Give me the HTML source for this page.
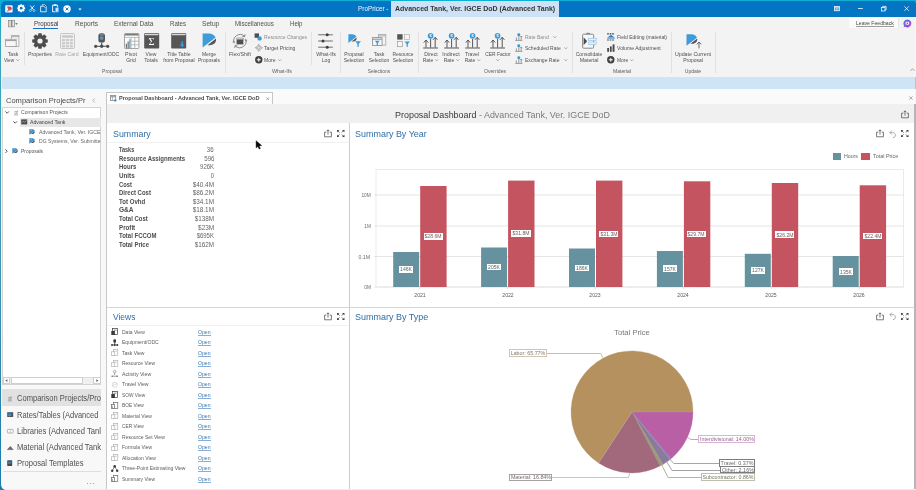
<!DOCTYPE html>
<html lang="en">
<head>
<meta charset="utf-8">
<title>ProPricer - Advanced Tank, Ver. IGCE DoD (Advanced Tank)</title>
<style>
html,body{margin:0;padding:0}
body{width:916px;height:490px;overflow:hidden;position:relative;background:#fff;font-family:"Liberation Sans",sans-serif;}
#app{position:absolute;left:0;top:0;width:916px;height:490px;overflow:hidden;background:#fff;will-change:transform}
#app div{position:absolute;box-sizing:border-box}
.t{white-space:nowrap}
.t span{position:static}
.i{position:absolute;overflow:visible}
section,header,nav,main{display:contents}
u{text-decoration:underline;text-decoration-thickness:0.5px;text-underline-offset:0.6px}
</style>
</head>
<body>
<div id="app">
<section id="window-frame">
<div style="left:0px;top:0px;width:916px;height:490px;background:#fff;"></div>
<div style="left:0px;top:0px;width:916px;height:18px;background:#0eafd4;"></div>
<div style="left:0px;top:16px;width:1px;height:474px;background:linear-gradient(to bottom,#0eafd4 0%,#36a4c0 4%,#3ba4bd 15%,#4a9ab5 38%,#2a86ad 80%,#1c7cae 100%);border-radius:0 0 0 4px;"></div>
<div style="left:1px;top:1px;width:915px;height:17px;background:#0375c3;border-radius:5px 3px 0 0;"></div>
<div style="left:1px;top:17px;width:914px;height:472px;background:#f7f7f7;"></div>
<div style="left:915px;top:17px;width:1px;height:60px;background:#f3f3f3;"></div>
<div style="left:915px;top:88px;width:1px;height:16px;background:#f4f4f4;"></div>
</section>
<header id="titlebar">
<svg class="i" style="left:5.2px;top:4.5px;" width="8" height="8" viewBox="0 0 8 8"><rect x="0.2" y="0.2" width="7.4" height="7.4" rx="0.8" fill="#f4f6fb"/><path d="M2 1.6h2.6c1.6 0 2.2 1 2.2 2 0 1.1-.8 1.9-2 1.9H3.6z" fill="#d9434f"/><path d="M1.6 6.6L4.4 3.2 5 4.6 3 6.6z" fill="#b5737f"/></svg>
<svg class="i" style="left:16.6px;top:4.2px;" width="8.4" height="8.4" viewBox="0 0 8.4 8.4"><rect x="3.24" y="0.20" width="1.92" height="8.00" rx="0.40" transform="rotate(0 4.2 4.2)" fill="#fff"/><rect x="3.24" y="0.20" width="1.92" height="8.00" rx="0.40" transform="rotate(45 4.2 4.2)" fill="#fff"/><rect x="3.24" y="0.20" width="1.92" height="8.00" rx="0.40" transform="rotate(90 4.2 4.2)" fill="#fff"/><rect x="3.24" y="0.20" width="1.92" height="8.00" rx="0.40" transform="rotate(135 4.2 4.2)" fill="#fff"/><circle cx="4.2" cy="4.2" r="3.12" fill="#fff"/><circle cx="4.2" cy="4.2" r="1.35" fill="#0375c3"/></svg>
<svg class="i" style="left:29px;top:5.2px;" width="6.4" height="7" viewBox="0 0 6.4 7"><path d="M1.2 0.5L4.6 4.8M5.2 0.5L1.8 4.8" stroke="#fff" stroke-width="0.9" fill="none"/><circle cx="1.4" cy="5.5" r="1" fill="none" stroke="#a8d4f6" stroke-width="0.8"/><circle cx="5" cy="5.5" r="1" fill="none" stroke="#a8d4f6" stroke-width="0.8"/></svg>
<svg class="i" style="left:40.2px;top:4.2px;" width="7" height="8.4" viewBox="0 0 7 8.4"><path d="M0.6 2.2h3.2l2.4 2.4v3.2h-5.6z" fill="none" stroke="#fff" stroke-width="0.8"/><path d="M2.2 2.2V0.6h2.4l1.8 1.8v2" fill="none" stroke="#cfe6fa" stroke-width="0.7"/></svg>
<svg class="i" style="left:51.8px;top:4.2px;" width="7.4" height="8.4" viewBox="0 0 7.4 8.4"><path d="M0.6 1.2h5v6.6h-5z" fill="none" stroke="#fff" stroke-width="0.9"/><rect x="1.8" y="0.3" width="2.6" height="1.6" fill="#fff"/><rect x="3.2" y="3.6" width="3.6" height="4.4" fill="#cfe6fa" stroke="#0673c4" stroke-width="0.4"/></svg>
<svg class="i" style="left:62.8px;top:4.5px;" width="8" height="8" viewBox="0 0 8 8"><circle cx="4" cy="4" r="3.7" fill="#fff"/><path d="M2.5 2.5l3 3M5.5 2.5l-3 3" stroke="#0673c4" stroke-width="0.9"/></svg>
<svg class="i" style="left:78px;top:8px;" width="4" height="3" viewBox="0 0 4 3"><path d="M0.4 0.6h3.2L2 2.4z" fill="#fff"/></svg>
<div class="t" style="top:4px;font-size:6.6px;line-height:9px;color:#eef6ff;transform:scaleX(0.968);transform-origin:left center;left:358.30px;">ProPricer - </div>
<div style="left:390.6px;top:1px;width:168.2px;height:15.6px;background:#cde2f6;"></div>
<div class="t" style="top:4px;font-size:6.8px;line-height:9px;color:#333;font-weight:bold;transform:scaleX(1.026);transform-origin:left center;left:394.80px;">Advanced Tank, Ver. IGCE DoD (Advanced Tank)</div>
<svg class="i" style="left:834.2px;top:6px;" width="6" height="5.4" viewBox="0 0 6 5.4"><rect x="0.4" y="0.4" width="5" height="4.4" fill="#5aa6de" stroke="#fff" stroke-width="0.7"/><path d="M0.4 1.7h5M2.9 1.7v3.1" stroke="#fff" stroke-width="0.5"/></svg>
<svg class="i" style="left:858.2px;top:8.2px;" width="5" height="1" viewBox="0 0 5 1"><rect x="0" y="0" width="4.7" height="0.8" fill="#fff"/></svg>
<svg class="i" style="left:881px;top:6px;" width="5.6" height="5.6" viewBox="0 0 5.6 5.6"><rect x="0.4" y="1.4" width="3.6" height="3.6" fill="none" stroke="#fff" stroke-width="0.75"/><path d="M1.6 1.4V0.4h3.5v3.5H4" fill="none" stroke="#fff" stroke-width="0.75"/></svg>
<svg class="i" style="left:903.8px;top:6.2px;" width="5.2" height="5.2" viewBox="0 0 5.2 5.2"><path d="M0.4 0.4l4.4 4.4M4.8 0.4L0.4 4.8" stroke="#fff" stroke-width="0.75"/></svg>
</header>
<section id="ribbon">
<div style="left:1px;top:17px;width:913.4px;height:60px;background:#f3f3f3;"></div>
<svg class="i" style="left:7.8px;top:19.8px;" width="10.4" height="7.4" viewBox="0 0 10.4 7.4"><rect x="0.5" y="0.5" width="5.9" height="6.3" fill="#ececec" stroke="#8a8a8a" stroke-width="0.8"/><rect x="0.9" y="0.9" width="1.8" height="5.5" fill="#d4d4d4"/><rect x="3.1" y="0.6" width="1.3" height="6.1" fill="#7c7c7c"/><path d="M7.2 3.1h2.6L8.5 4.9z" fill="#7a7a7a"/></svg>
<div class="t" style="top:19px;font-size:6.8px;line-height:9px;color:#3a3a3a;transform:scaleX(0.913);transform-origin:left center;left:33.80px;">Proposal</div>
<div class="t" style="top:19px;font-size:6.8px;line-height:9px;color:#505050;transform:scaleX(0.966);transform-origin:left center;left:74.50px;">Reports</div>
<div class="t" style="top:19px;font-size:6.8px;line-height:9px;color:#505050;transform:scaleX(0.954);transform-origin:left center;left:113.80px;">External Data</div>
<div class="t" style="top:19px;font-size:6.8px;line-height:9px;color:#505050;transform:scaleX(0.901);transform-origin:left center;left:169.80px;">Rates</div>
<div class="t" style="top:19px;font-size:6.8px;line-height:9px;color:#505050;transform:scaleX(0.974);transform-origin:left center;left:202.00px;">Setup</div>
<div class="t" style="top:19px;font-size:6.8px;line-height:9px;color:#505050;transform:scaleX(0.901);transform-origin:left center;left:235.30px;">Miscellaneous</div>
<div class="t" style="top:19px;font-size:6.8px;line-height:9px;color:#505050;transform:scaleX(0.894);transform-origin:left center;left:289.80px;">Help</div>
<div style="left:33.3px;top:28px;width:25px;height:1.2px;background:#1a72bd;"></div>
<div style="left:849px;top:17.6px;width:49.5px;height:10.6px;background:#fbfbfb;"></div>
<div class="t" style="top:19px;font-size:5.5px;line-height:8px;color:#444;transform:scaleX(0.929);transform-origin:left center;left:855.80px;">Leave Feedback</div>
<div style="left:855.8px;top:25.5px;width:37.8px;height:0.6px;background:#9c9c9c;"></div>
<div style="left:898.2px;top:18px;width:0.8px;height:10px;background:#e4e4e4;"></div>
<svg class="i" style="left:903.2px;top:19px;" width="9" height="9" viewBox="0 0 9 9"><defs><linearGradient id="fg" x1="0" y1="0" x2="1" y2="1"><stop offset="0" stop-color="#3f7fe8"/><stop offset="1" stop-color="#c23bd8"/></linearGradient></defs><path d="M4.4 0.4a4 4 0 1 1-2.3 7.3L0.6 8.3l.5-1.7A4 4 0 0 1 4.4.4z" fill="url(#fg)"/><rect x="2.6" y="2.8" width="3.6" height="3" rx="0.7" fill="#f3ecfb"/><circle cx="4.4" cy="4.3" r="0.8" fill="#8d55dd"/></svg>
<svg class="i" style="left:5px;top:35px;" width="14.5" height="12" viewBox="0 0 14.5 12"><rect x="6.5" y="0.5" width="7.4" height="11" fill="#f7f7f7" stroke="#a6a6a6" stroke-width="0.8"/><path d="M6.5 1.7h7.4" stroke="#a6a6a6" stroke-width="1"/><rect x="0.6" y="4.3" width="10.6" height="7.2" fill="#f7f7f7" stroke="#9a9a9a" stroke-width="0.8"/><path d="M0.6 5.6h10.6" stroke="#9a9a9a" stroke-width="1"/></svg>
<div class="t" style="top:50px;font-size:5.5px;line-height:8px;color:#505050;transform:scaleX(0.910);transform-origin:center center;left:-87.50px;width:200px;text-align:center;"><span>Task</span></div>
<div class="t" style="top:56px;font-size:5.5px;line-height:8px;color:#505050;transform:scaleX(0.862);transform-origin:center center;left:-90.60px;width:200px;text-align:center;"><span>View</span></div>
<svg class="i" style="left:16.4px;top:59.2px;" width="3.6" height="2.4" viewBox="0 0 3.6 2.4"><path d="M0.4 0.4L1.8 1.9 3.2 0.4" fill="none" stroke="#7a7a7a" stroke-width="0.6"/></svg>
<div style="left:23.8px;top:31.5px;width:0.8px;height:33px;background:#e2e2e2;"></div>
<svg class="i" style="left:32.2px;top:33px;" width="16" height="16" viewBox="0 0 16 16"><rect x="6.13" y="0.20" width="3.74" height="15.60" rx="0.78" transform="rotate(0 8 8)" fill="#4d4d4d"/><rect x="6.13" y="0.20" width="3.74" height="15.60" rx="0.78" transform="rotate(45 8 8)" fill="#4d4d4d"/><rect x="6.13" y="0.20" width="3.74" height="15.60" rx="0.78" transform="rotate(90 8 8)" fill="#4d4d4d"/><rect x="6.13" y="0.20" width="3.74" height="15.60" rx="0.78" transform="rotate(135 8 8)" fill="#4d4d4d"/><circle cx="8" cy="8" r="6.08" fill="#4d4d4d"/><circle cx="8" cy="8" r="2.60" fill="#f3f3f3"/></svg>
<div class="t" style="top:50px;font-size:5.5px;line-height:8px;color:#505050;transform:scaleX(0.949);transform-origin:center center;left:-60.00px;width:200px;text-align:center;"><span>Properties</span></div>
<svg class="i" style="left:60px;top:33px;" width="15" height="16" viewBox="0 0 15 16"><rect x="0.5" y="0.5" width="14" height="15" rx="1" fill="#f0f0f0" stroke="#bdbdbd" stroke-width="0.8"/><rect x="2" y="2.4" width="11" height="2.2" fill="#c6c6c6"/><rect x="2.0" y="6.0" width="3" height="2.2" fill="#cacaca"/><rect x="2.0" y="9.1" width="3" height="2.2" fill="#cacaca"/><rect x="2.0" y="12.2" width="3" height="2.2" fill="#cacaca"/><rect x="5.9" y="6.0" width="3" height="2.2" fill="#cacaca"/><rect x="5.9" y="9.1" width="3" height="2.2" fill="#cacaca"/><rect x="5.9" y="12.2" width="3" height="2.2" fill="#cacaca"/><rect x="9.8" y="6.0" width="3" height="2.2" fill="#cacaca"/><rect x="9.8" y="9.1" width="3" height="2.2" fill="#cacaca"/><rect x="9.8" y="12.2" width="3" height="2.2" fill="#cacaca"/></svg>
<div class="t" style="top:50px;font-size:5.5px;line-height:8px;color:#a6a6a6;transform:scaleX(0.929);transform-origin:center center;left:-32.80px;width:200px;text-align:center;"><span>Rate Card</span></div>
<svg class="i" style="left:93.6px;top:33px;" width="15.4" height="16" viewBox="0 0 15.4 16"><rect x="4.4" y="0.3" width="6.6" height="9.2" rx="2.6" fill="#555"/><rect x="6" y="3.4" width="3.4" height="3.4" rx="0.8" fill="#5d93c0"/><ellipse cx="7.7" cy="1.9" rx="2.2" ry="0.8" fill="#888"/><path d="M7.7 9.4v4M1.4 13.3h12.6" stroke="#4d4d4d" stroke-width="1.1"/><circle cx="1.7" cy="13.3" r="1.6" fill="#4d4d4d"/><circle cx="7.7" cy="13.3" r="1.7" fill="#4d4d4d"/><circle cx="13.7" cy="13.3" r="1.6" fill="#4d4d4d"/></svg>
<div class="t" style="top:50px;font-size:5.5px;line-height:8px;color:#505050;transform:scaleX(0.906);transform-origin:center center;left:1.00px;width:200px;text-align:center;"><span>Equipment/ODC</span></div>
<svg class="i" style="left:123.6px;top:33px;" width="15.4" height="16" viewBox="0 0 15.4 16"><rect x="0.5" y="0.5" width="14.4" height="15" rx="0.8" fill="#fbfbfb" stroke="#9a9a9a" stroke-width="0.9"/><rect x="0.9" y="0.9" width="13.6" height="1.6" fill="#7a7a7a"/><path d="M0.6 4.4h14.2M7 4.4v11M10.8 4.4v11M7 8.2h7.8M7 11.8h7.8" stroke="#a4a4a4" stroke-width="0.7" fill="none"/><rect x="1.8" y="10.6" width="1.1" height="4.6" fill="#666"/><rect x="3.6" y="8.4" width="1.1" height="6.8" fill="#666"/><rect x="5.3" y="6.2" width="1.1" height="9" fill="#3a9ad9"/></svg>
<div class="t" style="top:50px;font-size:5.5px;line-height:8px;color:#505050;transform:scaleX(0.964);transform-origin:center center;left:31.00px;width:200px;text-align:center;"><span>Pivot</span></div>
<div class="t" style="top:56px;font-size:5.5px;line-height:8px;color:#505050;transform:scaleX(0.914);transform-origin:center center;left:31.00px;width:200px;text-align:center;"><span>Grid</span></div>
<svg class="i" style="left:143.8px;top:33px;" width="15.4" height="16" viewBox="0 0 15.4 16"><rect x="0.2" y="0.2" width="15" height="15.4" rx="0.8" fill="#565656"/><rect x="0.9" y="1.1" width="13.6" height="1.1" fill="#e8e8e8"/></svg>
<div class="t" style="top:35px;font-size:10.5px;line-height:14px;color:#fff;left:51.50px;width:200px;text-align:center;font-family:'Liberation Serif',serif;"><span>Σ</span></div>
<div class="t" style="top:50px;font-size:5.5px;line-height:8px;color:#505050;transform:scaleX(0.913);transform-origin:center center;left:51.00px;width:200px;text-align:center;"><span>View</span></div>
<div class="t" style="top:56px;font-size:5.5px;line-height:8px;color:#505050;transform:scaleX(0.946);transform-origin:center center;left:51.00px;width:200px;text-align:center;"><span>Totals</span></div>
<svg class="i" style="left:171.4px;top:33px;" width="15.4" height="16" viewBox="0 0 15.4 16"><rect x="0.2" y="0.2" width="15" height="15.4" rx="0.8" fill="#565656"/><rect x="0.9" y="1.1" width="13.6" height="1.1" fill="#e8e8e8"/><path d="M11.2 8.6v3.6" stroke="#3a9ad9" stroke-width="1.6"/><path d="M8.8 11.4h4.8l-2.4 3z" fill="#3a9ad9"/></svg>
<div class="t" style="top:50px;font-size:5.5px;line-height:8px;color:#505050;transform:scaleX(0.941);transform-origin:center center;left:78.80px;width:200px;text-align:center;"><span>Title Table</span></div>
<div class="t" style="top:56px;font-size:5.5px;line-height:8px;color:#505050;transform:scaleX(0.920);transform-origin:center center;left:78.80px;width:200px;text-align:center;"><span>from Proposal</span></div>
<svg class="i" style="left:202px;top:33.4px;" width="15" height="15" viewBox="0 0 15 15"><path d="M0.6 0.4h6.6c3 0 5.4 1.6 6.4 4.2L0.6 14.6z" fill="#3f9cda"/><path d="M14 5.6c.6 3.6-2 6.6-6.4 6.6H5.6z" fill="#555"/></svg>
<div class="t" style="top:50px;font-size:5.5px;line-height:8px;color:#505050;transform:scaleX(0.911);transform-origin:center center;left:109.20px;width:200px;text-align:center;"><span>Merge</span></div>
<div class="t" style="top:56px;font-size:5.5px;line-height:8px;color:#505050;transform:scaleX(0.891);transform-origin:center center;left:109.20px;width:200px;text-align:center;"><span>Proposals</span></div>
<div class="t" style="top:67px;font-size:5.4px;line-height:8px;color:#5e5e5e;transform:scaleX(0.930);transform-origin:center center;left:12.00px;width:200px;text-align:center;"><span>Proposal</span></div>
<div style="left:224.6px;top:31.5px;width:0.8px;height:41px;background:#e2e2e2;"></div>
<svg class="i" style="left:231.8px;top:33px;" width="15.6" height="16" viewBox="0 0 15.6 16"><path d="M2.2 10.4A6.4 6.4 0 0 1 12.4 3.2" fill="none" stroke="#707070" stroke-width="0.8"/><path d="M13.6 5.8A6.4 6.4 0 0 1 3.4 13" fill="none" stroke="#707070" stroke-width="0.8"/><path d="M10.4 3.4l2.4.2.2-2.4" fill="none" stroke="#707070" stroke-width="0.8"/><path d="M5.4 12.8L3 12.6l-.2 2.4" fill="none" stroke="#707070" stroke-width="0.8"/><path d="M13 6.6l.8 1.6 1.4-1.2M2.8 9.6L2 8 0.6 9.2" fill="none" stroke="#707070" stroke-width="0.7"/><rect x="4.6" y="4.8" width="6.8" height="6.6" fill="#505050"/><rect x="5" y="5.2" width="6" height="1.2" fill="#e4e4e4"/></svg>
<div class="t" style="top:50px;font-size:5.5px;line-height:8px;color:#505050;transform:scaleX(0.950);transform-origin:center center;left:140.00px;width:200px;text-align:center;"><span>Flex/Shift</span></div>
<svg class="i" style="left:254.4px;top:33px;" width="8" height="8" viewBox="0 0 8 8"><rect x="0.6" y="0.4" width="4.4" height="4.4" fill="#4f4f4f"/><circle cx="5.6" cy="5.4" r="2.2" fill="#3a9ad9"/></svg>
<div class="t" style="top:33px;font-size:5.5px;line-height:8px;color:#8c8c8c;transform:scaleX(0.913);transform-origin:left center;left:264.20px;">Resource Changes</div>
<svg class="i" style="left:254.6px;top:44.2px;" width="7.6" height="7.6" viewBox="0 0 7.6 7.6"><path d="M3.8 0.5L7.1 3.8 3.8 7.1 0.5 3.8z" fill="none" stroke="#8a8a8a" stroke-width="0.6"/><circle cx="3.8" cy="3.8" r="1.3" fill="none" stroke="#7a7a7a" stroke-width="0.6"/><path d="M3.8 0v2M3.8 5.6v2M0 3.8h2M5.6 3.8h2" stroke="#8a8a8a" stroke-width="0.5"/></svg>
<div class="t" style="top:44px;font-size:5.5px;line-height:8px;color:#505050;transform:scaleX(0.933);transform-origin:left center;left:264.40px;">Target Pricing</div>
<svg class="i" style="left:254.6px;top:55.7px;" width="7.6" height="7.6" viewBox="0 0 7.6 7.6"><circle cx="3.8" cy="3.8" r="3.7" fill="#3d3d3d"/><path d="M3.8 1.8v4M1.8 3.8h4" stroke="#fff" stroke-width="1"/></svg>
<div class="t" style="top:56px;font-size:5.5px;line-height:8px;color:#505050;transform:scaleX(0.926);transform-origin:left center;left:264.20px;">More</div>
<svg class="i" style="left:277.7px;top:58.7px;" width="3.6" height="2.4" viewBox="0 0 3.6 2.4"><path d="M0.4 0.4L1.8 1.9 3.2 0.4" fill="none" stroke="#7a7a7a" stroke-width="0.6"/></svg>
<div style="left:311.1px;top:31.5px;width:0.8px;height:33px;background:#e2e2e2;"></div>
<svg class="i" style="left:318px;top:33px;" width="15" height="16" viewBox="0 0 15 16"><path d="M0.2 1.8h14.6M0.2 8h14.6M0.2 14.2h14.6" stroke="#4d4d4d" stroke-width="0.8"/><circle cx="9.2" cy="1.8" r="1.5" fill="#3d3d3d"/><circle cx="5" cy="8" r="1.5" fill="#3d3d3d"/><circle cx="9.2" cy="14.2" r="1.5" fill="#3d3d3d"/></svg>
<div class="t" style="top:50px;font-size:5.5px;line-height:8px;color:#505050;transform:scaleX(0.957);transform-origin:center center;left:225.60px;width:200px;text-align:center;"><span>What-Ifs</span></div>
<div class="t" style="top:56px;font-size:5.5px;line-height:8px;color:#505050;transform:scaleX(0.914);transform-origin:center center;left:225.60px;width:200px;text-align:center;"><span>Log</span></div>
<div class="t" style="top:67px;font-size:5.4px;line-height:8px;color:#5e5e5e;transform:scaleX(1.006);transform-origin:center center;left:182.20px;width:200px;text-align:center;"><span>What-Ifs</span></div>
<div style="left:340px;top:31.5px;width:0.8px;height:41px;background:#e2e2e2;"></div>
<svg class="i" style="left:347.6px;top:34px;" width="9.3" height="9.3" viewBox="0 0 15 15"><path d="M0.6 0.4h6.6c3 0 5.4 1.6 6.4 4.2L0.6 14.6z" fill="#3f9cda"/><path d="M14 5.6c.6 3.6-2 6.6-6.4 6.6H5.6z" fill="#555"/></svg>
<svg class="i" style="left:355px;top:41.4px;" width="6.2" height="6.2" viewBox="0 0 6.2 6.2"><path d="M0.2 0.2h5.75l-2.1849999999999996 2.53v2.9899999999999998h-1.38v-2.9899999999999998z" fill="#3a9ad9"/></svg>
<div class="t" style="top:50px;font-size:5.5px;line-height:8px;color:#505050;transform:scaleX(0.893);transform-origin:center center;left:254.00px;width:200px;text-align:center;"><span>Proposal</span></div>
<div class="t" style="top:56px;font-size:5.5px;line-height:8px;color:#505050;transform:scaleX(0.910);transform-origin:center center;left:254.00px;width:200px;text-align:center;"><span>Selection</span></div>
<svg class="i" style="left:371.8px;top:34.4px;" width="14.4" height="13" viewBox="0 0 14.4 13"><rect x="6.6" y="0.5" width="7.2" height="10.6" fill="#f4f4f4" stroke="#a4a4a4" stroke-width="0.8"/><path d="M6.6 1.9h7.2" stroke="#a4a4a4" stroke-width="0.9"/><rect x="0.5" y="3.6" width="9.6" height="7.8" fill="#f4f4f4" stroke="#8c8c8c" stroke-width="0.8"/><path d="M0.5 5.2h9.6" stroke="#8c8c8c" stroke-width="1"/><path d="M2.8 6.8h5.0l-1.9 2.2v2.6h-1.2v-2.6z" fill="#3a9ad9"/></svg>
<div class="t" style="top:50px;font-size:5.5px;line-height:8px;color:#505050;transform:scaleX(0.928);transform-origin:center center;left:278.50px;width:200px;text-align:center;"><span>Task</span></div>
<div class="t" style="top:56px;font-size:5.5px;line-height:8px;color:#505050;transform:scaleX(0.910);transform-origin:center center;left:278.50px;width:200px;text-align:center;"><span>Selection</span></div>
<svg class="i" style="left:397px;top:34px;" width="14" height="14" viewBox="0 0 14 14"><rect x="0.2" y="0.2" width="5.4" height="5.4" fill="#555"/><rect x="7.6" y="0.5" width="4.8" height="4.8" fill="#f6f6f6" stroke="#b0b0b0" stroke-width="0.7"/><rect x="0.5" y="7.5" width="4.8" height="5.2" fill="#f6f6f6" stroke="#9c9c9c" stroke-width="0.7"/><path d="M7.6 7.6h5.25l-1.9949999999999999 2.3100000000000005v2.7300000000000004h-1.26v-2.7300000000000004z" fill="#3a9ad9"/></svg>
<div class="t" style="top:50px;font-size:5.5px;line-height:8px;color:#505050;transform:scaleX(0.892);transform-origin:center center;left:303.20px;width:200px;text-align:center;"><span>Resource</span></div>
<div class="t" style="top:56px;font-size:5.5px;line-height:8px;color:#505050;transform:scaleX(0.910);transform-origin:center center;left:303.20px;width:200px;text-align:center;"><span>Selection</span></div>
<div class="t" style="top:67px;font-size:5.4px;line-height:8px;color:#5e5e5e;transform:scaleX(0.901);transform-origin:center center;left:279.00px;width:200px;text-align:center;"><span>Selections</span></div>
<div style="left:418.2px;top:31.5px;width:0.8px;height:41px;background:#e2e2e2;"></div>
<svg class="i" style="left:422.8px;top:33px;" width="15.2" height="15.6" viewBox="0 0 15.2 15.6"><path d="M0.2 15h14.8" stroke="#555" stroke-width="1"/><path d="M3 14.6V7.6M0.8 9.6L3 7l2.2 2.6" fill="none" stroke="#555" stroke-width="1"/><path d="M7.6 14.6V6" fill="none" stroke="#555" stroke-width="1"/><path d="M12.2 14.6V4.8M10 6.8l2.2-2.6 2.2 2.6" fill="none" stroke="#555" stroke-width="1"/><circle cx="7.6" cy="2.9" r="2.8" fill="#3a9ad9"/><text x="7.6" y="4.4" font-size="4.4" font-weight="bold" text-anchor="middle" fill="#eef7fe" font-family="Liberation Sans, sans-serif">$</text></svg>
<div class="t" style="top:50px;font-size:5.5px;line-height:8px;color:#505050;transform:scaleX(0.932);transform-origin:center center;left:330.50px;width:200px;text-align:center;"><span>Direct</span></div>
<div class="t" style="top:56px;font-size:5.5px;line-height:8px;color:#505050;transform:scaleX(0.912);transform-origin:center center;left:327.60px;width:200px;text-align:center;"><span>Rate</span></div>
<svg class="i" style="left:435.2px;top:59.2px;" width="3.6" height="2.4" viewBox="0 0 3.6 2.4"><path d="M0.4 0.4L1.8 1.9 3.2 0.4" fill="none" stroke="#7a7a7a" stroke-width="0.6"/></svg>
<svg class="i" style="left:443.6px;top:33px;" width="15.2" height="15.6" viewBox="0 0 15.2 15.6"><path d="M0.2 15h14.8" stroke="#555" stroke-width="1"/><path d="M3 14.6V7.6M0.8 9.6L3 7l2.2 2.6" fill="none" stroke="#555" stroke-width="1"/><path d="M7.6 14.6V6" fill="none" stroke="#555" stroke-width="1"/><path d="M12.2 14.6V4.8M10 6.8l2.2-2.6 2.2 2.6" fill="none" stroke="#555" stroke-width="1"/><circle cx="7.6" cy="2.9" r="2.8" fill="#3a9ad9"/><text x="7.6" y="4.4" font-size="4.4" font-weight="bold" text-anchor="middle" fill="#eef7fe" font-family="Liberation Sans, sans-serif">$</text></svg>
<div class="t" style="top:50px;font-size:5.5px;line-height:8px;color:#505050;transform:scaleX(0.975);transform-origin:center center;left:351.40px;width:200px;text-align:center;"><span>Indirect</span></div>
<div class="t" style="top:56px;font-size:5.5px;line-height:8px;color:#505050;transform:scaleX(0.912);transform-origin:center center;left:348.50px;width:200px;text-align:center;"><span>Rate</span></div>
<svg class="i" style="left:456.1px;top:59.2px;" width="3.6" height="2.4" viewBox="0 0 3.6 2.4"><path d="M0.4 0.4L1.8 1.9 3.2 0.4" fill="none" stroke="#7a7a7a" stroke-width="0.6"/></svg>
<svg class="i" style="left:464.8px;top:33px;" width="15.2" height="15.6" viewBox="0 0 15.2 15.6"><path d="M0.2 15h14.8" stroke="#555" stroke-width="1"/><path d="M3 14.6V7.6M0.8 9.6L3 7l2.2 2.6" fill="none" stroke="#555" stroke-width="1"/><path d="M7.6 14.6V6" fill="none" stroke="#555" stroke-width="1"/><path d="M12.2 14.6V4.8M10 6.8l2.2-2.6 2.2 2.6" fill="none" stroke="#555" stroke-width="1"/><circle cx="7.6" cy="2.9" r="2.8" fill="#3a9ad9"/><text x="7.6" y="4.4" font-size="4.4" font-weight="bold" text-anchor="middle" fill="#eef7fe" font-family="Liberation Sans, sans-serif">$</text></svg>
<div class="t" style="top:50px;font-size:5.5px;line-height:8px;color:#505050;transform:scaleX(0.928);transform-origin:center center;left:372.40px;width:200px;text-align:center;"><span>Travel</span></div>
<div class="t" style="top:56px;font-size:5.5px;line-height:8px;color:#505050;transform:scaleX(0.912);transform-origin:center center;left:369.50px;width:200px;text-align:center;"><span>Rate</span></div>
<svg class="i" style="left:477.1px;top:59.2px;" width="3.6" height="2.4" viewBox="0 0 3.6 2.4"><path d="M0.4 0.4L1.8 1.9 3.2 0.4" fill="none" stroke="#7a7a7a" stroke-width="0.6"/></svg>
<svg class="i" style="left:490px;top:33px;" width="15.2" height="15.6" viewBox="0 0 15.2 15.6"><path d="M0.2 15h14.8" stroke="#555" stroke-width="1"/><path d="M3 14.6V7.6M0.8 9.6L3 7l2.2 2.6" fill="none" stroke="#555" stroke-width="1"/><path d="M7.6 14.6V6" fill="none" stroke="#555" stroke-width="1"/><path d="M12.2 14.6V4.8M10 6.8l2.2-2.6 2.2 2.6" fill="none" stroke="#555" stroke-width="1"/><circle cx="7.6" cy="2.9" r="2.8" fill="#3a9ad9"/><text x="7.6" y="4.4" font-size="4.4" font-weight="bold" text-anchor="middle" fill="#eef7fe" font-family="Liberation Sans, sans-serif">$</text></svg>
<div class="t" style="top:50px;font-size:5.5px;line-height:8px;color:#505050;transform:scaleX(0.884);transform-origin:center center;left:397.60px;width:200px;text-align:center;"><span>CER Factor</span></div>
<svg class="i" style="left:495.8px;top:58.8px;" width="3.6" height="2.4" viewBox="0 0 3.6 2.4"><path d="M0.4 0.4L1.8 1.9 3.2 0.4" fill="none" stroke="#7a7a7a" stroke-width="0.6"/></svg>
<svg class="i" style="left:515px;top:32.8px;" width="7.6" height="8" viewBox="0 0 7.6 8"><path d="M0.2 7.4h7.2" stroke="#666" stroke-width="0.6"/><path d="M1.4 7.2V4.4M3.8 7.2V3M6.2 7.2V3.2M5.2 4.2l1-1.2 1 1.2" fill="none" stroke="#666" stroke-width="0.6"/><circle cx="3.8" cy="1.7" r="1.5" fill="#3a9ad9"/></svg>
<div class="t" style="top:33px;font-size:5.5px;line-height:8px;color:#8c8c8c;transform:scaleX(0.912);transform-origin:left center;left:524.80px;">Rate Band</div>
<svg class="i" style="left:552.7px;top:35.9px;" width="3.6" height="2.4" viewBox="0 0 3.6 2.4"><path d="M0.4 0.4L1.8 1.9 3.2 0.4" fill="none" stroke="#7a7a7a" stroke-width="0.6"/></svg>
<svg class="i" style="left:515px;top:44px;" width="7.6" height="8" viewBox="0 0 7.6 8"><path d="M0.2 7.4h7.2" stroke="#666" stroke-width="0.6"/><path d="M1.4 7.2V4.4M3.8 7.2V3M6.2 7.2V3.2M5.2 4.2l1-1.2 1 1.2" fill="none" stroke="#666" stroke-width="0.6"/><circle cx="3.8" cy="1.7" r="1.5" fill="#3a9ad9"/></svg>
<div class="t" style="top:44px;font-size:5.5px;line-height:8px;color:#505050;transform:scaleX(0.912);transform-origin:left center;left:524.80px;">Scheduled Rate</div>
<svg class="i" style="left:564.2px;top:47.1px;" width="3.6" height="2.4" viewBox="0 0 3.6 2.4"><path d="M0.4 0.4L1.8 1.9 3.2 0.4" fill="none" stroke="#7a7a7a" stroke-width="0.6"/></svg>
<svg class="i" style="left:515px;top:55.5px;" width="7.6" height="8" viewBox="0 0 7.6 8"><path d="M0.2 7.4h7.2" stroke="#666" stroke-width="0.6"/><path d="M1.4 7.2V4.4M3.8 7.2V3M6.2 7.2V3.2M5.2 4.2l1-1.2 1 1.2" fill="none" stroke="#666" stroke-width="0.6"/><circle cx="3.8" cy="1.7" r="1.5" fill="#3a9ad9"/></svg>
<div class="t" style="top:56px;font-size:5.5px;line-height:8px;color:#505050;transform:scaleX(0.917);transform-origin:left center;left:524.80px;">Exchange Rate</div>
<svg class="i" style="left:563.7px;top:58.7px;" width="3.6" height="2.4" viewBox="0 0 3.6 2.4"><path d="M0.4 0.4L1.8 1.9 3.2 0.4" fill="none" stroke="#7a7a7a" stroke-width="0.6"/></svg>
<div class="t" style="top:67px;font-size:5.4px;line-height:8px;color:#5e5e5e;transform:scaleX(0.941);transform-origin:center center;left:395.00px;width:200px;text-align:center;"><span>Overrides</span></div>
<div style="left:572.1px;top:31.5px;width:0.8px;height:41px;background:#e2e2e2;"></div>
<svg class="i" style="left:581.8px;top:33px;" width="16" height="16" viewBox="0 0 16 16"><rect x="0.6" y="1.2" width="11" height="14" rx="1" fill="#f8f8f8" stroke="#6e6e6e" stroke-width="0.8"/><path d="M4.8 1.2V0.3h2.6v0.9" fill="none" stroke="#555" stroke-width="0.7"/><path d="M1.6 4.2l3.6 4-3.6 4z" fill="#4a4a4a"/><rect x="6.6" y="5.2" width="7.6" height="2.4" fill="#e6f1fb" stroke="#8cbde6" stroke-width="0.6"/><rect x="6.6" y="9" width="7.6" height="2.4" fill="#e6f1fb" stroke="#8cbde6" stroke-width="0.6"/></svg>
<div class="t" style="top:50px;font-size:5.5px;line-height:8px;color:#505050;transform:scaleX(0.916);transform-origin:center center;left:489.40px;width:200px;text-align:center;"><span>Consolidate</span></div>
<div class="t" style="top:56px;font-size:5.5px;line-height:8px;color:#505050;transform:scaleX(0.951);transform-origin:center center;left:489.40px;width:200px;text-align:center;"><span>Material</span></div>
<svg class="i" style="left:606.8px;top:33px;" width="8" height="8" viewBox="0 0 8 8"><path d="M0.2 0.8h7.6M0.2 7h7.6" stroke="#3a3a3a" stroke-width="1.2" stroke-dasharray="1.6 0.9"/><path d="M0.4 4.6h7.2L4 1.8z" fill="#2f80c8"/><path d="M0.2 5.2h7.6" stroke="#2f80c8" stroke-width="0.8"/></svg>
<div class="t" style="top:33px;font-size:5.5px;line-height:8px;color:#505050;transform:scaleX(0.909);transform-origin:left center;left:617.00px;">Field Editing (material)</div>
<svg class="i" style="left:607px;top:44px;" width="8" height="8" viewBox="0 0 8 8"><rect x="0.2" y="4" width="1.8" height="3.8" fill="#4a4a4a"/><rect x="2.9" y="2.4" width="1.8" height="5.4" fill="#4a4a4a"/><rect x="5.6" y="0.4" width="1.9" height="7.4" fill="#4a4a4a"/></svg>
<div class="t" style="top:44px;font-size:5.5px;line-height:8px;color:#505050;transform:scaleX(0.930);transform-origin:left center;left:617.00px;">Volume Adjustment</div>
<svg class="i" style="left:606.8px;top:55.7px;" width="7.6" height="7.6" viewBox="0 0 7.6 7.6"><circle cx="3.8" cy="3.8" r="3.7" fill="#3d3d3d"/><path d="M3.8 1.8v4M1.8 3.8h4" stroke="#fff" stroke-width="1"/></svg>
<div class="t" style="top:56px;font-size:5.5px;line-height:8px;color:#505050;transform:scaleX(0.894);transform-origin:left center;left:617.00px;">More</div>
<svg class="i" style="left:630px;top:58.7px;" width="3.6" height="2.4" viewBox="0 0 3.6 2.4"><path d="M0.4 0.4L1.8 1.9 3.2 0.4" fill="none" stroke="#7a7a7a" stroke-width="0.6"/></svg>
<div class="t" style="top:67px;font-size:5.4px;line-height:8px;color:#5e5e5e;transform:scaleX(0.949);transform-origin:center center;left:521.80px;width:200px;text-align:center;"><span>Material</span></div>
<div style="left:671.2px;top:31.5px;width:0.8px;height:41px;background:#e2e2e2;"></div>
<svg class="i" style="left:685.8px;top:33.6px;" width="12" height="12" viewBox="0 0 15 15"><path d="M0.6 0.4h6.6c3 0 5.4 1.6 6.4 4.2L0.6 14.6z" fill="#3f9cda"/><path d="M14 5.6c.6 3.6-2 6.6-6.4 6.6H5.6z" fill="#555"/></svg>
<svg class="i" style="left:696px;top:41px;" width="6" height="8" viewBox="0 0 6 8"><path d="M3 7.4V1.2M0.8 3.4L3 1l2.2 2.4" fill="none" stroke="#4d4d4d" stroke-width="0.8"/></svg>
<div class="t" style="top:50px;font-size:5.5px;line-height:8px;color:#505050;transform:scaleX(0.963);transform-origin:center center;left:593.40px;width:200px;text-align:center;"><span>Update Current</span></div>
<div class="t" style="top:56px;font-size:5.5px;line-height:8px;color:#505050;transform:scaleX(0.902);transform-origin:center center;left:593.40px;width:200px;text-align:center;"><span>Proposal</span></div>
<div class="t" style="top:67px;font-size:5.4px;line-height:8px;color:#5e5e5e;transform:scaleX(0.943);transform-origin:center center;left:593.20px;width:200px;text-align:center;"><span>Update</span></div>
<div style="left:715px;top:31.5px;width:0.8px;height:41px;background:#e2e2e2;"></div>
<svg class="i" style="left:910.4px;top:68px;" width="5" height="3.4" viewBox="0 0 5 3.4"><path d="M0.5 2.8L2.5 0.7 4.5 2.8" fill="none" stroke="#8a8a8a" stroke-width="0.8"/></svg>
<div style="left:2px;top:77px;width:913px;height:11.6px;background:#cfe4f5;"></div>
<div style="left:915px;top:77px;width:1px;height:11.6px;background:#b4c4d0;"></div>
</section>
<nav id="navigation-pane">
<div style="left:1px;top:88.8px;width:105px;height:400.2px;background:#f8f8f8;"></div>
<div class="t" style="top:95px;font-size:7.9px;line-height:11px;color:#4a4a4a;transform:scaleX(0.954);transform-origin:left center;left:6.00px;">Comparison Projects/Pr</div>
<svg class="i" style="left:92.4px;top:98px;" width="3.4" height="5" viewBox="0 0 3.4 5"><path d="M2.8 0.5L0.7 2.5 2.8 4.5" fill="none" stroke="#9a9a9a" stroke-width="0.7"/></svg>
<div style="left:2.4px;top:107.4px;width:99px;height:277.4px;background:#fff;border:0.8px solid #d4d4d4;"></div>
<div style="left:20.4px;top:117.7px;width:80.2px;height:9.2px;background:#e7e7e7;"></div>
<svg class="i" style="left:4.6px;top:111.4px;" width="4.4" height="2.8" viewBox="0 0 4.4 2.8"><path d="M0.4 0.4L2.2 2.2 4 0.4" fill="none" stroke="#4a4a4a" stroke-width="0.9"/></svg>
<svg class="i" style="left:12.6px;top:109.8px;" width="6" height="6" viewBox="0 0 6 6"><path d="M1.6 1.4h3.2M1.2 3.1h3.8M1 4.8h4" stroke="#9a9a9a" stroke-width="0.8"/><path d="M4.8 0.2L3.4 3.4" stroke="#a4a4a4" stroke-width="0.6"/></svg>
<div class="t" style="top:108px;font-size:5.2px;line-height:8px;color:#555;transform:scaleX(0.972);transform-origin:left center;left:21.20px;">Comparison Projects</div>
<svg class="i" style="left:13.4px;top:121px;" width="4.4" height="2.8" viewBox="0 0 4.4 2.8"><path d="M0.4 0.4L2.2 2.2 4 0.4" fill="none" stroke="#4a4a4a" stroke-width="0.9"/></svg>
<svg class="i" style="left:20.8px;top:119.4px;" width="6.4" height="5.8" viewBox="0 0 6.4 5.8"><rect x="0.2" y="0.4" width="6" height="5" fill="#4a4a4a"/><path d="M0.8 3.8l1.6-1.6 1.2 1 1.8-1.6" stroke="#d0d0d0" stroke-width="0.6" fill="none"/></svg>
<div class="t" style="top:118px;font-size:5.2px;line-height:8px;color:#444;left:30.00px;">Advanced Tank</div>
<svg class="i" style="left:28.8px;top:129px;" width="6" height="6" viewBox="0 0 6 6"><path d="M0.3 0.3h3c1.4 0 2.3.7 2.4 1.8L0.3 5.8z" fill="#3a8fcf"/><path d="M5.8 2.2c.2 1.7-.9 2.9-2.8 2.9H1.9z" fill="#4a4a4a"/><circle cx="2.2" cy="1.7" r="0.7" fill="#e0a060"/></svg>
<div class="t" style="top:128px;font-size:5.2px;line-height:8px;color:#666;transform:scaleX(1.004);transform-origin:left center;left:38.80px;">Advanced Tank, Ver. IGCE</div>
<svg class="i" style="left:28.8px;top:138.4px;" width="6" height="6" viewBox="0 0 6 6"><path d="M0.3 0.3h3c1.4 0 2.3.7 2.4 1.8L0.3 5.8z" fill="#3a8fcf"/><path d="M5.8 2.2c.2 1.7-.9 2.9-2.8 2.9H1.9z" fill="#4a4a4a"/><circle cx="2.2" cy="1.7" r="0.7" fill="#e0a060"/></svg>
<div class="t" style="top:137px;font-size:5.2px;line-height:8px;color:#666;transform:scaleX(0.980);transform-origin:left center;left:38.80px;">DG Systems, Ver. Submitte</div>
<svg class="i" style="left:5.2px;top:148.8px;" width="2.8" height="4.4" viewBox="0 0 2.8 4.4"><path d="M0.4 0.4L2.2 2.2 0.4 4" fill="none" stroke="#4a4a4a" stroke-width="0.9"/></svg>
<svg class="i" style="left:12.2px;top:148px;" width="6" height="6" viewBox="0 0 6 6"><path d="M0.3 0.3h3c1.4 0 2.3.7 2.4 1.8L0.3 5.8z" fill="#3a8fcf"/><path d="M5.8 2.2c.2 1.7-.9 2.9-2.8 2.9H1.9z" fill="#4a4a4a"/><circle cx="2.2" cy="1.7" r="0.7" fill="#e0a060"/></svg>
<div class="t" style="top:147px;font-size:5.2px;line-height:8px;color:#555;transform:scaleX(0.953);transform-origin:left center;left:21.00px;">Proposals</div>
<div style="left:2.8px;top:376.8px;width:98.2px;height:7.6px;background:#f0f0f0;border-top:0.6px solid #dcdcdc;"></div>
<div style="left:3px;top:377.4px;width:7.2px;height:6.6px;background:#fdfdfd;border:0.6px solid #cfcfcf;"></div>
<div style="left:93px;top:377.4px;width:7.6px;height:6.6px;background:#fdfdfd;border:0.6px solid #cfcfcf;"></div>
<div style="left:10.8px;top:377.4px;width:72px;height:6.6px;background:#fff;border:0.6px solid #cfcfcf;"></div>
<svg class="i" style="left:5.2px;top:378.9px;" width="2.8" height="3.2" viewBox="0 0 2.8 3.2"><path d="M2.4 0.2L0.4 1.6 2.4 3z" fill="#5a5a5a"/></svg>
<svg class="i" style="left:95.6px;top:378.9px;" width="2.8" height="3.2" viewBox="0 0 2.8 3.2"><path d="M0.4 0.2L2.4 1.6 0.4 3z" fill="#5a5a5a"/></svg>
<div style="left:2.4px;top:389.2px;width:99px;height:17px;background:#e1e1e1;"></div>
<div class="t" style="top:393px;font-size:8.2px;line-height:11px;color:#505050;transform:scaleX(0.923);transform-origin:left center;left:16.60px;">Comparison Projects/Pro</div>
<div class="t" style="top:410px;font-size:8.2px;line-height:11px;color:#505050;transform:scaleX(0.917);transform-origin:left center;left:16.60px;">Rates/Tables (Advanced</div>
<div class="t" style="top:426px;font-size:8.2px;line-height:11px;color:#505050;transform:scaleX(0.934);transform-origin:left center;left:16.60px;">Libraries (Advanced Tanl</div>
<div class="t" style="top:442px;font-size:8.2px;line-height:11px;color:#505050;transform:scaleX(0.934);transform-origin:left center;left:16.60px;">Material (Advanced Tank</div>
<div class="t" style="top:458px;font-size:8.2px;line-height:11px;color:#505050;transform:scaleX(0.928);transform-origin:left center;left:16.60px;">Proposal Templates</div>
<svg class="i" style="left:7.4px;top:395.6px;" width="6" height="6" viewBox="0 0 6 6"><path d="M1.4 1.4h3.2M1 3.1h3.8M0.8 4.8h4" stroke="#8e8e8e" stroke-width="0.8"/><path d="M4.6 0.2L3.2 3.4" stroke="#9a9a9a" stroke-width="0.6"/></svg>
<svg class="i" style="left:6.8px;top:412px;" width="6.6" height="5.4" viewBox="0 0 6.6 5.4"><rect x="0.2" y="0.2" width="6" height="4.8" fill="#4a5560"/><rect x="1.2" y="1.6" width="3" height="2.4" fill="#3a8fcf"/></svg>
<svg class="i" style="left:6.8px;top:428.6px;" width="6.6" height="4.6" viewBox="0 0 6.6 4.6"><rect x="0.4" y="0.4" width="5.8" height="3.6" rx="0.6" fill="#fafafa" stroke="#9a9a9a" stroke-width="0.7"/><path d="M3.3 0.4v3.6" stroke="#b4b4b4" stroke-width="0.6"/></svg>
<svg class="i" style="left:6.8px;top:444.6px;" width="6.6" height="5" viewBox="0 0 6.6 5"><path d="M0.2 4.4h6.2L3.3 1z" fill="#6a6a6a"/><path d="M0.2 4.6h6.2" stroke="#555" stroke-width="0.6"/></svg>
<svg class="i" style="left:7.2px;top:460.2px;" width="5.6" height="6.2" viewBox="0 0 5.6 6.2"><rect x="0.2" y="0.2" width="5" height="5.8" rx="0.5" fill="#4a4a4a"/><rect x="1" y="1.6" width="3.4" height="2.2" fill="#3f7fa8"/></svg>
<div style="left:2.6px;top:470.8px;width:98.8px;height:0.7px;background:#dedede;"></div>
<div class="t" style="top:476px;font-size:8px;line-height:11px;color:#777;transform:scaleX(1.134);transform-origin:center center;left:-8.60px;width:200px;text-align:center;letter-spacing:0.6px;"><span>...</span></div>
</nav>
<main id="dashboard">
<div style="left:106px;top:89.2px;width:808.5px;height:400px;background:#fafafa;"></div>
<div style="left:106px;top:103.6px;width:808.5px;height:0.8px;background:#cfcfcf;"></div>
<div style="left:106px;top:92.4px;width:167px;height:12px;background:#fff;border:0.8px solid #c6c6c6;border-bottom:none;"></div>
<svg class="i" style="left:109.8px;top:94.6px;" width="7" height="7" viewBox="0 0 7 7"><rect x="0.4" y="0.4" width="5.4" height="5.2" fill="#fff" stroke="#777" stroke-width="0.7"/><path d="M0.4 2h5.4M2.4 2v3.6" stroke="#888" stroke-width="0.6"/><rect x="0.4" y="0.4" width="5.4" height="1.4" fill="#9a9a9a"/><circle cx="5.2" cy="5.4" r="1.2" fill="#3a8fcf"/></svg>
<div class="t" style="top:94px;font-size:5.6px;line-height:8px;color:#4a4a4a;font-weight:bold;transform:scaleX(0.991);transform-origin:left center;left:119.00px;">Proposal Dashboard - Advanced Tank, Ver. IGCE DoD</div>
<svg class="i" style="left:265.6px;top:96.6px;" width="3.4" height="3.4" viewBox="0 0 3.4 3.4"><path d="M0.4 0.4l2.6 2.6M3 0.4L0.4 3" stroke="#777" stroke-width="0.6"/></svg>
<svg class="i" style="left:909.4px;top:95.6px;" width="4" height="4" viewBox="0 0 4 4"><path d="M0.4 0.4l3.2 3.2M3.6 0.4L0.4 3.6" stroke="#8a8a8a" stroke-width="0.7"/></svg>
<div style="left:106px;top:104px;width:0.9px;height:385.2px;background:#c8c8c8;"></div>
<div style="left:914.3px;top:103.6px;width:1.7px;height:386.4px;background:#b6b6b6;"></div>
<div style="left:106.9px;top:104.4px;width:807.4px;height:19px;background:#f0f0f0;"></div>
<div class="t" style="top:109px;font-size:8.6px;line-height:12px;color:#7a7a7a;transform:scaleX(1.040);transform-origin:left center;left:395.00px;"><span style="color:#3a3a3a">Proposal Dashboard</span> - Advanced Tank, Ver. IGCE DoD</div>
<svg class="i" style="left:901px;top:110px;" width="8" height="8.4" viewBox="0 0 8 8.4"><path d="M2.2 3.2H0.6v4.6h6.8V3.2H5.8" fill="none" stroke="#555" stroke-width="0.8"/><path d="M4 5.6V0.9M2.7 2.2L4 0.8 5.3 2.2" fill="none" stroke="#555" stroke-width="0.8"/></svg>
<div style="left:106.9px;top:123.4px;width:807.4px;height:365.8px;background:#fff;"></div>
<div style="left:349px;top:123.4px;width:1.2px;height:365.8px;background:#cdcdcd;"></div>
<div style="left:106.9px;top:306.7px;width:807.4px;height:0.9px;background:#d6d6d6;"></div>
<div class="t" style="top:127px;font-size:9.4px;line-height:13px;color:#2f6fa8;transform:scaleX(0.942);transform-origin:left center;left:113.00px;">Summary</div>
<div class="t" style="top:127px;font-size:9.4px;line-height:13px;color:#2f6fa8;transform:scaleX(0.957);transform-origin:left center;left:354.80px;">Summary By Year</div>
<div class="t" style="top:310px;font-size:9.4px;line-height:13px;color:#2f6fa8;transform:scaleX(0.902);transform-origin:left center;left:113.00px;">Views</div>
<div class="t" style="top:310px;font-size:9.4px;line-height:13px;color:#2f6fa8;transform:scaleX(0.958);transform-origin:left center;left:354.80px;">Summary By Type</div>
<div style="left:107px;top:142px;width:242px;height:1px;background:#f0f0f0;"></div>
<div style="left:107px;top:325px;width:242px;height:1px;background:#f0f0f0;"></div>
<svg class="i" style="left:323.6px;top:129.4px;" width="8" height="8.4" viewBox="0 0 8 8.4"><path d="M2.2 3.2H0.6v4.6h6.8V3.2H5.8" fill="none" stroke="#555" stroke-width="0.8"/><path d="M4 5.6V0.9M2.7 2.2L4 0.8 5.3 2.2" fill="none" stroke="#555" stroke-width="0.8"/></svg>
<svg class="i" style="left:336.5px;top:130.1px;" width="7.4" height="7" viewBox="0 0 7.4 7"><path d="M0 0H2.5L1.12 1.12L0 2.5z" fill="#3c3c3c"/><path d="M0.5 0.5L2.5 2.5" stroke="#3c3c3c" stroke-width="0.8"/><path d="M7.4 0H4.9L6.28 1.12L7.4 2.5z" fill="#3c3c3c"/><path d="M6.9 0.5L4.9 2.5" stroke="#3c3c3c" stroke-width="0.8"/><path d="M0 7.0H2.5L1.12 5.88L0 4.5z" fill="#3c3c3c"/><path d="M0.5 6.5L2.5 4.5" stroke="#3c3c3c" stroke-width="0.8"/><path d="M7.4 7.0H4.9L6.28 5.88L7.4 4.5z" fill="#3c3c3c"/><path d="M6.9 6.5L4.9 4.5" stroke="#3c3c3c" stroke-width="0.8"/></svg>
<svg class="i" style="left:875.8px;top:129.4px;" width="8" height="8.4" viewBox="0 0 8 8.4"><path d="M2.2 3.2H0.6v4.6h6.8V3.2H5.8" fill="none" stroke="#555" stroke-width="0.8"/><path d="M4 5.6V0.9M2.7 2.2L4 0.8 5.3 2.2" fill="none" stroke="#555" stroke-width="0.8"/></svg>
<svg class="i" style="left:889px;top:129.8px;" width="7" height="8" viewBox="0 0 7 8"><path d="M1 2.6h2.6c1.8 0 2.8 1.2 2.8 2.6S5.6 7.6 4 7.6" fill="none" stroke="#9a9a9a" stroke-width="0.8"/><path d="M2.8 0.6L0.8 2.6l2 2" fill="none" stroke="#9a9a9a" stroke-width="0.8"/></svg>
<svg class="i" style="left:901.3px;top:130.1px;" width="7.4" height="7" viewBox="0 0 7.4 7"><path d="M0 0H2.5L1.12 1.12L0 2.5z" fill="#3c3c3c"/><path d="M0.5 0.5L2.5 2.5" stroke="#3c3c3c" stroke-width="0.8"/><path d="M7.4 0H4.9L6.28 1.12L7.4 2.5z" fill="#3c3c3c"/><path d="M6.9 0.5L4.9 2.5" stroke="#3c3c3c" stroke-width="0.8"/><path d="M0 7.0H2.5L1.12 5.88L0 4.5z" fill="#3c3c3c"/><path d="M0.5 6.5L2.5 4.5" stroke="#3c3c3c" stroke-width="0.8"/><path d="M7.4 7.0H4.9L6.28 5.88L7.4 4.5z" fill="#3c3c3c"/><path d="M6.9 6.5L4.9 4.5" stroke="#3c3c3c" stroke-width="0.8"/></svg>
<svg class="i" style="left:323.6px;top:312px;" width="8" height="8.4" viewBox="0 0 8 8.4"><path d="M2.2 3.2H0.6v4.6h6.8V3.2H5.8" fill="none" stroke="#555" stroke-width="0.8"/><path d="M4 5.6V0.9M2.7 2.2L4 0.8 5.3 2.2" fill="none" stroke="#555" stroke-width="0.8"/></svg>
<svg class="i" style="left:336.5px;top:312.7px;" width="7.4" height="7" viewBox="0 0 7.4 7"><path d="M0 0H2.5L1.12 1.12L0 2.5z" fill="#3c3c3c"/><path d="M0.5 0.5L2.5 2.5" stroke="#3c3c3c" stroke-width="0.8"/><path d="M7.4 0H4.9L6.28 1.12L7.4 2.5z" fill="#3c3c3c"/><path d="M6.9 0.5L4.9 2.5" stroke="#3c3c3c" stroke-width="0.8"/><path d="M0 7.0H2.5L1.12 5.88L0 4.5z" fill="#3c3c3c"/><path d="M0.5 6.5L2.5 4.5" stroke="#3c3c3c" stroke-width="0.8"/><path d="M7.4 7.0H4.9L6.28 5.88L7.4 4.5z" fill="#3c3c3c"/><path d="M6.9 6.5L4.9 4.5" stroke="#3c3c3c" stroke-width="0.8"/></svg>
<svg class="i" style="left:875.8px;top:312px;" width="8" height="8.4" viewBox="0 0 8 8.4"><path d="M2.2 3.2H0.6v4.6h6.8V3.2H5.8" fill="none" stroke="#555" stroke-width="0.8"/><path d="M4 5.6V0.9M2.7 2.2L4 0.8 5.3 2.2" fill="none" stroke="#555" stroke-width="0.8"/></svg>
<svg class="i" style="left:889px;top:312.4px;" width="7" height="8" viewBox="0 0 7 8"><path d="M1 2.6h2.6c1.8 0 2.8 1.2 2.8 2.6S5.6 7.6 4 7.6" fill="none" stroke="#9a9a9a" stroke-width="0.8"/><path d="M2.8 0.6L0.8 2.6l2 2" fill="none" stroke="#9a9a9a" stroke-width="0.8"/></svg>
<svg class="i" style="left:901.3px;top:312.7px;" width="7.4" height="7" viewBox="0 0 7.4 7"><path d="M0 0H2.5L1.12 1.12L0 2.5z" fill="#3c3c3c"/><path d="M0.5 0.5L2.5 2.5" stroke="#3c3c3c" stroke-width="0.8"/><path d="M7.4 0H4.9L6.28 1.12L7.4 2.5z" fill="#3c3c3c"/><path d="M6.9 0.5L4.9 2.5" stroke="#3c3c3c" stroke-width="0.8"/><path d="M0 7.0H2.5L1.12 5.88L0 4.5z" fill="#3c3c3c"/><path d="M0.5 6.5L2.5 4.5" stroke="#3c3c3c" stroke-width="0.8"/><path d="M7.4 7.0H4.9L6.28 5.88L7.4 4.5z" fill="#3c3c3c"/><path d="M6.9 6.5L4.9 4.5" stroke="#3c3c3c" stroke-width="0.8"/></svg>
<section id="summary">
<div class="t" style="top:145px;font-size:6.7px;line-height:9px;color:#4c4c4c;font-weight:bold;transform:scaleX(0.823);transform-origin:left center;left:119.00px;">Tasks</div>
<div class="t" style="top:145px;font-size:6.9px;line-height:9px;color:#666;transform:scaleX(0.886);transform-origin:right center;right:702.00px;">36</div>
<div class="t" style="top:154px;font-size:6.7px;line-height:9px;color:#4c4c4c;font-weight:bold;transform:scaleX(0.893);transform-origin:left center;left:119.00px;">Resource Assignments</div>
<div class="t" style="top:154px;font-size:6.9px;line-height:9px;color:#666;transform:scaleX(0.887);transform-origin:right center;right:702.00px;">596</div>
<div class="t" style="top:162px;font-size:6.7px;line-height:9px;color:#4c4c4c;font-weight:bold;transform:scaleX(0.895);transform-origin:left center;left:119.00px;">Hours</div>
<div class="t" style="top:162px;font-size:6.9px;line-height:9px;color:#666;transform:scaleX(0.870);transform-origin:right center;right:702.00px;">926K</div>
<div class="t" style="top:171px;font-size:6.7px;line-height:9px;color:#4c4c4c;font-weight:bold;transform:scaleX(0.939);transform-origin:left center;left:119.00px;">Units</div>
<div class="t" style="top:171px;font-size:6.9px;line-height:9px;color:#666;transform:scaleX(0.833);transform-origin:right center;right:702.00px;">0</div>
<div class="t" style="top:180px;font-size:6.7px;line-height:9px;color:#4c4c4c;font-weight:bold;transform:scaleX(0.861);transform-origin:left center;left:119.00px;">Cost</div>
<div class="t" style="top:180px;font-size:6.9px;line-height:9px;color:#666;transform:scaleX(0.927);transform-origin:right center;right:702.00px;">$40.4M</div>
<div class="t" style="top:188px;font-size:6.7px;line-height:9px;color:#4c4c4c;font-weight:bold;transform:scaleX(0.894);transform-origin:left center;left:119.00px;">Direct Cost</div>
<div class="t" style="top:188px;font-size:6.9px;line-height:9px;color:#666;transform:scaleX(0.927);transform-origin:right center;right:702.00px;">$86.2M</div>
<div class="t" style="top:197px;font-size:6.7px;line-height:9px;color:#4c4c4c;font-weight:bold;transform:scaleX(0.908);transform-origin:left center;left:119.00px;">Tot Ovhd</div>
<div class="t" style="top:197px;font-size:6.9px;line-height:9px;color:#666;transform:scaleX(0.927);transform-origin:right center;right:702.00px;">$34.1M</div>
<div class="t" style="top:205px;font-size:6.7px;line-height:9px;color:#4c4c4c;font-weight:bold;transform:scaleX(0.982);transform-origin:left center;left:119.00px;">G&amp;A</div>
<div class="t" style="top:205px;font-size:6.9px;line-height:9px;color:#666;transform:scaleX(0.927);transform-origin:right center;right:702.00px;">$18.1M</div>
<div class="t" style="top:214px;font-size:6.7px;line-height:9px;color:#4c4c4c;font-weight:bold;transform:scaleX(0.891);transform-origin:left center;left:119.00px;">Total Cost</div>
<div class="t" style="top:214px;font-size:6.9px;line-height:9px;color:#666;transform:scaleX(0.916);transform-origin:right center;right:702.00px;">$138M</div>
<div class="t" style="top:223px;font-size:6.7px;line-height:9px;color:#4c4c4c;font-weight:bold;transform:scaleX(0.927);transform-origin:left center;left:119.00px;">Profit</div>
<div class="t" style="top:223px;font-size:6.9px;line-height:9px;color:#666;transform:scaleX(0.939);transform-origin:right center;right:702.00px;">$23M</div>
<div class="t" style="top:231px;font-size:6.7px;line-height:9px;color:#4c4c4c;font-weight:bold;transform:scaleX(0.896);transform-origin:left center;left:119.00px;">Total FCCOM</div>
<div class="t" style="top:231px;font-size:6.9px;line-height:9px;color:#666;transform:scaleX(0.868);transform-origin:right center;right:702.00px;">$695K</div>
<div class="t" style="top:240px;font-size:6.7px;line-height:9px;color:#4c4c4c;font-weight:bold;transform:scaleX(0.890);transform-origin:left center;left:119.00px;">Total Price</div>
<div class="t" style="top:240px;font-size:6.9px;line-height:9px;color:#666;transform:scaleX(0.916);transform-origin:right center;right:702.00px;">$162M</div>
</section>
<section id="views">
<svg class="i" style="left:110.8px;top:328.15px;" width="7.4" height="7.4" viewBox="0 0 7.4 7.4"><rect x="1.6" y="0.6" width="5" height="6" fill="#fff" stroke="#3a3a3a" stroke-width="0.7"/><rect x="0.3" y="3" width="3.6" height="4" fill="#3a3a3a"/><path d="M2.6 2.2h3" stroke="#3a3a3a" stroke-width="0.6"/></svg>
<div class="t" style="top:328px;font-size:5.6px;line-height:8px;color:#5c5c5c;transform:scaleX(0.897);transform-origin:left center;left:122.30px;">Data View</div>
<div class="t" style="top:328px;font-size:5.6px;line-height:8px;color:#3a78b4;transform:scaleX(0.913);transform-origin:left center;left:198.00px;">Open</div>
<div style="left:198px;top:335px;width:12.5px;height:0.6px;background:#86aed8;"></div>
<svg class="i" style="left:110.8px;top:338.65px;" width="7.4" height="7.4" viewBox="0 0 7.4 7.4"><rect x="2.4" y="0.2" width="2.6" height="3.6" rx="1" fill="#3a3a3a"/><path d="M3.7 3.6v2.2M0.6 6h6.2" stroke="#3a3a3a" stroke-width="0.8"/><circle cx="1" cy="6" r="0.9" fill="#3a3a3a"/><circle cx="3.7" cy="6" r="0.9" fill="#3a3a3a"/><circle cx="6.4" cy="6" r="0.9" fill="#3a3a3a"/></svg>
<div class="t" style="top:338px;font-size:5.6px;line-height:8px;color:#5c5c5c;transform:scaleX(0.901);transform-origin:left center;left:122.30px;">Equipment/ODC</div>
<div class="t" style="top:338px;font-size:5.6px;line-height:8px;color:#3a78b4;transform:scaleX(0.913);transform-origin:left center;left:198.00px;">Open</div>
<div style="left:198px;top:345px;width:12.5px;height:0.6px;background:#86aed8;"></div>
<svg class="i" style="left:110.8px;top:349.15px;" width="7.4" height="7.4" viewBox="0 0 7.4 7.4"><rect x="2.4" y="0.6" width="4.4" height="6" fill="#fff" stroke="#a8a8a8" stroke-width="0.6"/><rect x="0.4" y="2.8" width="3.4" height="3.8" fill="#fff" stroke="#a8a8a8" stroke-width="0.6"/><path d="M3 2.2h3" stroke="#a8a8a8" stroke-width="0.5"/></svg>
<div class="t" style="top:349px;font-size:5.6px;line-height:8px;color:#5c5c5c;transform:scaleX(0.893);transform-origin:left center;left:122.30px;">Task View</div>
<div class="t" style="top:349px;font-size:5.6px;line-height:8px;color:#3a78b4;transform:scaleX(0.913);transform-origin:left center;left:198.00px;">Open</div>
<div style="left:198px;top:356px;width:12.5px;height:0.6px;background:#86aed8;"></div>
<svg class="i" style="left:110.8px;top:359.65px;" width="7.4" height="7.4" viewBox="0 0 7.4 7.4"><rect x="2.4" y="0.6" width="4.4" height="6" fill="#fff" stroke="#a8a8a8" stroke-width="0.6"/><rect x="0.4" y="2.8" width="3.4" height="3.8" fill="#fff" stroke="#a8a8a8" stroke-width="0.6"/><path d="M3 2.2h3" stroke="#a8a8a8" stroke-width="0.5"/></svg>
<div class="t" style="top:359px;font-size:5.6px;line-height:8px;color:#5c5c5c;transform:scaleX(0.879);transform-origin:left center;left:122.30px;">Resource View</div>
<div class="t" style="top:359px;font-size:5.6px;line-height:8px;color:#3a78b4;transform:scaleX(0.913);transform-origin:left center;left:198.00px;">Open</div>
<div style="left:198px;top:366px;width:12.5px;height:0.6px;background:#86aed8;"></div>
<svg class="i" style="left:110.8px;top:370.15px;" width="7.4" height="7.4" viewBox="0 0 7.4 7.4"><circle cx="3.7" cy="1.6" r="1.3" fill="none" stroke="#777" stroke-width="0.6"/><path d="M3.7 3v2M0.8 6.2h5.8" stroke="#777" stroke-width="0.7"/><circle cx="1.2" cy="6.2" r="0.8" fill="#777"/><circle cx="6.2" cy="6.2" r="0.8" fill="#777"/></svg>
<div class="t" style="top:370px;font-size:5.6px;line-height:8px;color:#5c5c5c;transform:scaleX(0.933);transform-origin:left center;left:122.30px;">Activity View</div>
<div class="t" style="top:370px;font-size:5.6px;line-height:8px;color:#3a78b4;transform:scaleX(0.913);transform-origin:left center;left:198.00px;">Open</div>
<div style="left:198px;top:377px;width:12.5px;height:0.6px;background:#86aed8;"></div>
<svg class="i" style="left:110.8px;top:380.65px;" width="7.4" height="7.4" viewBox="0 0 7.4 7.4"><circle cx="3.8" cy="3.8" r="2.6" fill="none" stroke="#c4c4c4" stroke-width="0.6"/><path d="M1.4 4.6l4.6-2" stroke="#c4c4c4" stroke-width="0.6"/></svg>
<div class="t" style="top:380px;font-size:5.6px;line-height:8px;color:#5c5c5c;transform:scaleX(0.916);transform-origin:left center;left:122.30px;">Travel View</div>
<div class="t" style="top:380px;font-size:5.6px;line-height:8px;color:#3a78b4;transform:scaleX(0.913);transform-origin:left center;left:198.00px;">Open</div>
<div style="left:198px;top:387px;width:12.5px;height:0.6px;background:#86aed8;"></div>
<svg class="i" style="left:110.8px;top:391.15px;" width="7.4" height="7.4" viewBox="0 0 7.4 7.4"><rect x="1.6" y="0.6" width="5" height="6" fill="#fff" stroke="#3a3a3a" stroke-width="0.7"/><rect x="0.3" y="3" width="3.6" height="4" fill="#3a3a3a"/><path d="M2.6 2.2h3" stroke="#3a3a3a" stroke-width="0.6"/></svg>
<div class="t" style="top:391px;font-size:5.6px;line-height:8px;color:#5c5c5c;transform:scaleX(0.861);transform-origin:left center;left:122.30px;">SOW View</div>
<div class="t" style="top:391px;font-size:5.6px;line-height:8px;color:#3a78b4;transform:scaleX(0.913);transform-origin:left center;left:198.00px;">Open</div>
<div style="left:198px;top:398px;width:12.5px;height:0.6px;background:#86aed8;"></div>
<svg class="i" style="left:110.8px;top:401.65px;" width="7.4" height="7.4" viewBox="0 0 7.4 7.4"><rect x="2.4" y="0.6" width="4.4" height="6" fill="#fff" stroke="#666" stroke-width="0.7"/><rect x="0.4" y="2.6" width="3" height="4" fill="#fff" stroke="#666" stroke-width="0.7"/><path d="M1.4 3.8v2.6" stroke="#666" stroke-width="0.6"/></svg>
<div class="t" style="top:401px;font-size:5.6px;line-height:8px;color:#5c5c5c;transform:scaleX(0.859);transform-origin:left center;left:122.30px;">BOE View</div>
<div class="t" style="top:401px;font-size:5.6px;line-height:8px;color:#3a78b4;transform:scaleX(0.913);transform-origin:left center;left:198.00px;">Open</div>
<div style="left:198px;top:408px;width:12.5px;height:0.6px;background:#86aed8;"></div>
<svg class="i" style="left:110.8px;top:412.15px;" width="7.4" height="7.4" viewBox="0 0 7.4 7.4"><rect x="2.4" y="0.6" width="4.4" height="6" fill="#fff" stroke="#a8a8a8" stroke-width="0.6"/><rect x="0.4" y="2.8" width="3.4" height="3.8" fill="#fff" stroke="#a8a8a8" stroke-width="0.6"/><path d="M3 2.2h3" stroke="#a8a8a8" stroke-width="0.5"/></svg>
<div class="t" style="top:412px;font-size:5.6px;line-height:8px;color:#5c5c5c;transform:scaleX(0.896);transform-origin:left center;left:122.30px;">Material View</div>
<div class="t" style="top:412px;font-size:5.6px;line-height:8px;color:#3a78b4;transform:scaleX(0.913);transform-origin:left center;left:198.00px;">Open</div>
<div style="left:198px;top:419px;width:12.5px;height:0.6px;background:#86aed8;"></div>
<svg class="i" style="left:110.8px;top:422.65px;" width="7.4" height="7.4" viewBox="0 0 7.4 7.4"><rect x="2.4" y="0.6" width="4.4" height="6" fill="#fff" stroke="#a8a8a8" stroke-width="0.6"/><rect x="0.4" y="2.8" width="3.4" height="3.8" fill="#fff" stroke="#a8a8a8" stroke-width="0.6"/><path d="M3 2.2h3" stroke="#a8a8a8" stroke-width="0.5"/></svg>
<div class="t" style="top:422px;font-size:5.6px;line-height:8px;color:#5c5c5c;transform:scaleX(0.859);transform-origin:left center;left:122.30px;">CER View</div>
<div class="t" style="top:422px;font-size:5.6px;line-height:8px;color:#3a78b4;transform:scaleX(0.913);transform-origin:left center;left:198.00px;">Open</div>
<div style="left:198px;top:429px;width:12.5px;height:0.6px;background:#86aed8;"></div>
<svg class="i" style="left:110.8px;top:433.15px;" width="7.4" height="7.4" viewBox="0 0 7.4 7.4"><rect x="2.4" y="0.6" width="4.4" height="6" fill="#fff" stroke="#a8a8a8" stroke-width="0.6"/><rect x="0.4" y="2.8" width="3.4" height="3.8" fill="#fff" stroke="#a8a8a8" stroke-width="0.6"/><path d="M3 2.2h3" stroke="#a8a8a8" stroke-width="0.5"/></svg>
<div class="t" style="top:433px;font-size:5.6px;line-height:8px;color:#5c5c5c;transform:scaleX(0.902);transform-origin:left center;left:122.30px;">Resource Set View</div>
<div class="t" style="top:433px;font-size:5.6px;line-height:8px;color:#3a78b4;transform:scaleX(0.913);transform-origin:left center;left:198.00px;">Open</div>
<div style="left:198px;top:440px;width:12.5px;height:0.6px;background:#86aed8;"></div>
<svg class="i" style="left:110.8px;top:443.65px;" width="7.4" height="7.4" viewBox="0 0 7.4 7.4"><rect x="2.4" y="0.6" width="4.4" height="6" fill="#fff" stroke="#a8a8a8" stroke-width="0.6"/><rect x="0.4" y="2.8" width="3.4" height="3.8" fill="#fff" stroke="#a8a8a8" stroke-width="0.6"/><path d="M3 2.2h3" stroke="#a8a8a8" stroke-width="0.5"/></svg>
<div class="t" style="top:443px;font-size:5.6px;line-height:8px;color:#5c5c5c;transform:scaleX(0.880);transform-origin:left center;left:122.30px;">Formula View</div>
<div class="t" style="top:443px;font-size:5.6px;line-height:8px;color:#3a78b4;transform:scaleX(0.913);transform-origin:left center;left:198.00px;">Open</div>
<div style="left:198px;top:450px;width:12.5px;height:0.6px;background:#86aed8;"></div>
<svg class="i" style="left:110.8px;top:454.15px;" width="7.4" height="7.4" viewBox="0 0 7.4 7.4"><rect x="2.4" y="0.6" width="4.4" height="6" fill="#fff" stroke="#a8a8a8" stroke-width="0.6"/><rect x="0.4" y="2.8" width="3.4" height="3.8" fill="#fff" stroke="#a8a8a8" stroke-width="0.6"/><path d="M3 2.2h3" stroke="#a8a8a8" stroke-width="0.5"/></svg>
<div class="t" style="top:454px;font-size:5.6px;line-height:8px;color:#5c5c5c;transform:scaleX(0.898);transform-origin:left center;left:122.30px;">Allocation View</div>
<div class="t" style="top:454px;font-size:5.6px;line-height:8px;color:#3a78b4;transform:scaleX(0.913);transform-origin:left center;left:198.00px;">Open</div>
<div style="left:198px;top:461px;width:12.5px;height:0.6px;background:#86aed8;"></div>
<svg class="i" style="left:110.8px;top:464.65px;" width="7.4" height="7.4" viewBox="0 0 7.4 7.4"><circle cx="3.7" cy="1.4" r="1.3" fill="#3a3a3a"/><circle cx="1.2" cy="5.8" r="1.2" fill="#3a3a3a"/><circle cx="6.2" cy="5.8" r="1.2" fill="#3a3a3a"/><path d="M3.7 1.4L1.2 5.8M3.7 1.4l2.5 4.4" stroke="#3a3a3a" stroke-width="0.6"/></svg>
<div class="t" style="top:464px;font-size:5.6px;line-height:8px;color:#5c5c5c;transform:scaleX(0.901);transform-origin:left center;left:122.30px;">Three-Point Estimating View</div>
<div class="t" style="top:464px;font-size:5.6px;line-height:8px;color:#3a78b4;transform:scaleX(0.913);transform-origin:left center;left:198.00px;">Open</div>
<div style="left:198px;top:471px;width:12.5px;height:0.6px;background:#86aed8;"></div>
<svg class="i" style="left:110.8px;top:475.15px;" width="7.4" height="7.4" viewBox="0 0 7.4 7.4"><rect x="2.4" y="0.6" width="4.4" height="6" fill="#fff" stroke="#666" stroke-width="0.7"/><rect x="0.4" y="2.6" width="3" height="4" fill="#fff" stroke="#666" stroke-width="0.7"/><path d="M1.4 3.8v2.6" stroke="#666" stroke-width="0.6"/></svg>
<div class="t" style="top:475px;font-size:5.6px;line-height:8px;color:#5c5c5c;transform:scaleX(0.880);transform-origin:left center;left:122.30px;">Summary View</div>
<div class="t" style="top:475px;font-size:5.6px;line-height:8px;color:#3a78b4;transform:scaleX(0.913);transform-origin:left center;left:198.00px;">Open</div>
<div style="left:198px;top:482px;width:12.5px;height:0.6px;background:#86aed8;"></div>
</section>
<section id="summary-by-year">
<svg class="i" style="left:0px;top:0px;" width="916" height="490" viewBox="0 0 916 490"><rect x="376.0" y="169.6" width="527.6" height="117.4" fill="#fff" stroke="#e3e3e3" stroke-width="0.7"/><path d="M376.0 195H903.6" stroke="#dedede" stroke-width="0.8"/><path d="M376.0 226H903.6" stroke="#dedede" stroke-width="0.8"/><path d="M376.0 256.5H903.6" stroke="#dedede" stroke-width="0.8"/><path d="M376.0 287.0H903.6" stroke="#e2e2e2" stroke-width="0.8"/><path d="M419.8 287.0v2.2" stroke="#c8c8c8" stroke-width="0.6"/><path d="M384.6 287.0v1.2" stroke="#d8d8d8" stroke-width="0.5"/><path d="M402.2 287.0v1.2" stroke="#d8d8d8" stroke-width="0.5"/><path d="M437.4 287.0v1.2" stroke="#d8d8d8" stroke-width="0.5"/><path d="M455.0 287.0v1.2" stroke="#d8d8d8" stroke-width="0.5"/><path d="M507.7 287.0v2.2" stroke="#c8c8c8" stroke-width="0.6"/><path d="M472.5 287.0v1.2" stroke="#d8d8d8" stroke-width="0.5"/><path d="M490.1 287.0v1.2" stroke="#d8d8d8" stroke-width="0.5"/><path d="M525.3 287.0v1.2" stroke="#d8d8d8" stroke-width="0.5"/><path d="M542.9 287.0v1.2" stroke="#d8d8d8" stroke-width="0.5"/><path d="M595.6 287.0v2.2" stroke="#c8c8c8" stroke-width="0.6"/><path d="M560.4 287.0v1.2" stroke="#d8d8d8" stroke-width="0.5"/><path d="M578.0 287.0v1.2" stroke="#d8d8d8" stroke-width="0.5"/><path d="M613.2 287.0v1.2" stroke="#d8d8d8" stroke-width="0.5"/><path d="M630.8 287.0v1.2" stroke="#d8d8d8" stroke-width="0.5"/><path d="M683.5 287.0v2.2" stroke="#c8c8c8" stroke-width="0.6"/><path d="M648.3 287.0v1.2" stroke="#d8d8d8" stroke-width="0.5"/><path d="M665.9 287.0v1.2" stroke="#d8d8d8" stroke-width="0.5"/><path d="M701.1 287.0v1.2" stroke="#d8d8d8" stroke-width="0.5"/><path d="M718.7 287.0v1.2" stroke="#d8d8d8" stroke-width="0.5"/><path d="M771.4 287.0v2.2" stroke="#c8c8c8" stroke-width="0.6"/><path d="M736.2 287.0v1.2" stroke="#d8d8d8" stroke-width="0.5"/><path d="M753.8 287.0v1.2" stroke="#d8d8d8" stroke-width="0.5"/><path d="M789.0 287.0v1.2" stroke="#d8d8d8" stroke-width="0.5"/><path d="M806.6 287.0v1.2" stroke="#d8d8d8" stroke-width="0.5"/><path d="M859.3 287.0v2.2" stroke="#c8c8c8" stroke-width="0.6"/><path d="M824.1 287.0v1.2" stroke="#d8d8d8" stroke-width="0.5"/><path d="M841.7 287.0v1.2" stroke="#d8d8d8" stroke-width="0.5"/><path d="M876.9 287.0v1.2" stroke="#d8d8d8" stroke-width="0.5"/><path d="M894.5 287.0v1.2" stroke="#d8d8d8" stroke-width="0.5"/><path d="M374.4 195h1.6" stroke="#d0d0d0" stroke-width="0.6"/><path d="M374.4 226h1.6" stroke="#d0d0d0" stroke-width="0.6"/><path d="M374.4 256.5h1.6" stroke="#d0d0d0" stroke-width="0.6"/><path d="M374.4 287h1.6" stroke="#d0d0d0" stroke-width="0.6"/><rect x="393.2" y="252" width="26" height="35.0" fill="#66919e"/><rect x="420.2" y="186" width="26.4" height="101.0" fill="#c4545f"/><rect x="481.1" y="247.5" width="26" height="39.5" fill="#66919e"/><rect x="508.1" y="180.6" width="26.4" height="106.4" fill="#c4545f"/><rect x="569.0" y="248.5" width="26" height="38.5" fill="#66919e"/><rect x="596.0" y="180.6" width="26.4" height="106.4" fill="#c4545f"/><rect x="656.9" y="251" width="26" height="36.0" fill="#66919e"/><rect x="683.9" y="181.3" width="26.4" height="105.7" fill="#c4545f"/><rect x="744.8" y="253.8" width="26" height="33.2" fill="#66919e"/><rect x="771.8" y="183" width="26.4" height="104.0" fill="#c4545f"/><rect x="832.7" y="256" width="26" height="31.0" fill="#66919e"/><rect x="859.7" y="185.3" width="26.4" height="101.7" fill="#c4545f"/></svg>
<div style="left:833px;top:152.6px;width:8.4px;height:7px;background:#66919e;"></div>
<div class="t" style="top:152px;font-size:5px;line-height:8px;color:#666;transform:scaleX(1.049);transform-origin:left center;left:844.00px;">Hours</div>
<div style="left:861.3px;top:152.6px;width:8.4px;height:7px;background:#c4545f;"></div>
<div class="t" style="top:152px;font-size:5px;line-height:8px;color:#666;transform:scaleX(1.080);transform-origin:left center;left:872.60px;">Total Price</div>
<div class="t" style="top:191px;font-size:5px;line-height:8px;color:#6a6a6a;transform:scaleX(0.955);transform-origin:right center;right:545.40px;">10M</div>
<div class="t" style="top:222px;font-size:5px;line-height:8px;color:#6a6a6a;transform:scaleX(0.949);transform-origin:right center;right:545.40px;">1M</div>
<div class="t" style="top:253px;font-size:5px;line-height:8px;color:#6a6a6a;transform:scaleX(1.043);transform-origin:right center;right:545.40px;">0.1M</div>
<div class="t" style="top:283px;font-size:5px;line-height:8px;color:#6a6a6a;transform:scaleX(0.949);transform-origin:right center;right:545.40px;">0M</div>
<div class="t" style="top:291px;font-size:5px;line-height:8px;color:#5a5a5a;transform:scaleX(1.025);transform-origin:center center;left:319.60px;width:200px;text-align:center;"><span>2021</span></div>
<div class="t" style="top:291px;font-size:5px;line-height:8px;color:#5a5a5a;transform:scaleX(1.025);transform-origin:center center;left:407.50px;width:200px;text-align:center;"><span>2022</span></div>
<div class="t" style="top:291px;font-size:5px;line-height:8px;color:#5a5a5a;transform:scaleX(1.025);transform-origin:center center;left:495.40px;width:200px;text-align:center;"><span>2023</span></div>
<div class="t" style="top:291px;font-size:5px;line-height:8px;color:#5a5a5a;transform:scaleX(1.025);transform-origin:center center;left:583.30px;width:200px;text-align:center;"><span>2024</span></div>
<div class="t" style="top:291px;font-size:5px;line-height:8px;color:#5a5a5a;transform:scaleX(1.025);transform-origin:center center;left:671.20px;width:200px;text-align:center;"><span>2025</span></div>
<div class="t" style="top:291px;font-size:5px;line-height:8px;color:#5a5a5a;transform:scaleX(1.025);transform-origin:center center;left:759.10px;width:200px;text-align:center;"><span>2026</span></div>
<div style="left:399px;top:266.1px;width:14px;height:6.9px;background:#fff;"></div>
<div class="t" style="top:265px;font-size:5.2px;line-height:8px;color:#5c6468;transform:scaleX(0.973);transform-origin:center center;left:306.00px;width:200px;text-align:center;"><span>146K</span></div>
<div style="left:487px;top:263.6px;width:14px;height:6.9px;background:#fff;"></div>
<div class="t" style="top:263px;font-size:5.2px;line-height:8px;color:#5c6468;transform:scaleX(0.973);transform-origin:center center;left:394.00px;width:200px;text-align:center;"><span>205K</span></div>
<div style="left:575px;top:264.6px;width:14px;height:6.9px;background:#fff;"></div>
<div class="t" style="top:264px;font-size:5.2px;line-height:8px;color:#5c6468;transform:scaleX(0.973);transform-origin:center center;left:482.00px;width:200px;text-align:center;"><span>186K</span></div>
<div style="left:663px;top:265.4px;width:14px;height:6.9px;background:#fff;"></div>
<div class="t" style="top:265px;font-size:5.2px;line-height:8px;color:#5c6468;transform:scaleX(0.973);transform-origin:center center;left:570.00px;width:200px;text-align:center;"><span>157K</span></div>
<div style="left:750.8px;top:266.9px;width:14px;height:6.9px;background:#fff;"></div>
<div class="t" style="top:266px;font-size:5.2px;line-height:8px;color:#5c6468;transform:scaleX(0.973);transform-origin:center center;left:657.80px;width:200px;text-align:center;"><span>127K</span></div>
<div style="left:838.5px;top:268.4px;width:14px;height:6.9px;background:#fff;"></div>
<div class="t" style="top:268px;font-size:5.2px;line-height:8px;color:#5c6468;transform:scaleX(0.973);transform-origin:center center;left:745.50px;width:200px;text-align:center;"><span>135K</span></div>
<div style="left:423.7px;top:233.1px;width:19.2px;height:6.9px;background:#fff;"></div>
<div class="t" style="top:232px;font-size:5.2px;line-height:8px;color:#6c5c5e;transform:scaleX(0.982);transform-origin:center center;left:333.30px;width:200px;text-align:center;"><span>$28.6M</span></div>
<div style="left:511.4px;top:230.1px;width:19.2px;height:6.9px;background:#fff;"></div>
<div class="t" style="top:229px;font-size:5.2px;line-height:8px;color:#6c5c5e;transform:scaleX(0.982);transform-origin:center center;left:421.00px;width:200px;text-align:center;"><span>$31.8M</span></div>
<div style="left:599.2px;top:230.6px;width:19.2px;height:6.9px;background:#fff;"></div>
<div class="t" style="top:230px;font-size:5.2px;line-height:8px;color:#6c5c5e;transform:scaleX(0.982);transform-origin:center center;left:508.80px;width:200px;text-align:center;"><span>$31.3M</span></div>
<div style="left:686.7px;top:230.6px;width:19.2px;height:6.9px;background:#fff;"></div>
<div class="t" style="top:230px;font-size:5.2px;line-height:8px;color:#6c5c5e;transform:scaleX(0.982);transform-origin:center center;left:596.30px;width:200px;text-align:center;"><span>$29.7M</span></div>
<div style="left:774.9px;top:231.4px;width:19.2px;height:6.9px;background:#fff;"></div>
<div class="t" style="top:231px;font-size:5.2px;line-height:8px;color:#6c5c5e;transform:scaleX(0.982);transform-origin:center center;left:684.50px;width:200px;text-align:center;"><span>$26.2M</span></div>
<div style="left:862.9px;top:232.6px;width:19.2px;height:6.9px;background:#fff;"></div>
<div class="t" style="top:232px;font-size:5.2px;line-height:8px;color:#6c5c5e;transform:scaleX(0.982);transform-origin:center center;left:772.50px;width:200px;text-align:center;"><span>$22.4M</span></div>
</section>
<section id="summary-by-type">
<div class="t" style="top:328px;font-size:6.6px;line-height:9px;color:#777;transform:scaleX(1.156);transform-origin:center center;left:532.30px;width:200px;text-align:center;"><span>Total Price</span></div>
<svg class="i" style="left:0px;top:0px;" width="916" height="490" viewBox="0 0 916 490"><path d="M632.0 411.9L693.00 411.90A61 61 0 0 1 670.88 458.90z" fill="#b85fa6" stroke="#b85fa6" stroke-width="0.3"/><path d="M632.0 411.9L670.88 458.90A61 61 0 0 1 669.78 459.79z" fill="#6f7fb0" stroke="#6f7fb0" stroke-width="0.3"/><path d="M632.0 411.9L669.78 459.79A61 61 0 0 1 662.95 464.46z" fill="#8a7a9c" stroke="#8a7a9c" stroke-width="0.3"/><path d="M632.0 411.9L662.95 464.46A61 61 0 0 1 660.07 466.06z" fill="#9a9c74" stroke="#9a9c74" stroke-width="0.3"/><path d="M632.0 411.9L660.07 466.06A61 61 0 0 1 598.57 462.93z" fill="#a2697c" stroke="#a2697c" stroke-width="0.3"/><path d="M632.0 411.9L598.57 462.93A61 61 0 1 1 693.00 411.90z" fill="#b59160" stroke="#b59160" stroke-width="0.3"/><path d="M632.0 411.9L693.00 411.90" stroke="#d8a8c8" stroke-width="0.35" opacity="0.7"/><path d="M632.0 411.9L670.88 458.90" stroke="#d8a8c8" stroke-width="0.35" opacity="0.7"/><path d="M632.0 411.9L598.60 462.94" stroke="#d8a8c8" stroke-width="0.35" opacity="0.7"/><path d="M546.5 353.5L600.6 353.5L603.0 357.8" fill="none" stroke="#c4b49c" stroke-width="0.9"/><path d="M687.4 437.4L691.0 439.5L698.4 439.5" fill="none" stroke="#cc90c0" stroke-width="0.9"/><path d="M668.6 458.0L673.8 463.5L719.5 463.5" fill="none" stroke="#9a9aac" stroke-width="0.9"/><path d="M666.0 460.6L672.0 470.5L720.5 470.5" fill="none" stroke="#989898" stroke-width="0.9"/><path d="M661.8 465.0L668.0 477.5L701.5 477.5" fill="none" stroke="#adad98" stroke-width="0.9"/><path d="M552.0 477.5L628.4 477.5L629.8 473.0" fill="none" stroke="#c4bcc0" stroke-width="0.9"/></svg>
<div style="left:509.4px;top:349.4px;width:37.2px;height:8px;background:#fff;border:1px solid #d0c4b4;"></div>
<div class="t" style="top:349px;font-size:6px;line-height:8px;color:#807868;transform:scaleX(0.886);transform-origin:center center;left:428.00px;width:200px;text-align:center;"><span>Labor: 65.77%</span></div>
<div style="left:698.4px;top:435.4px;width:56.4px;height:7.9px;background:#fff;border:1px solid #dab4d4;"></div>
<div class="t" style="top:435px;font-size:6px;line-height:8px;color:#94648c;transform:scaleX(0.891);transform-origin:center center;left:626.60px;width:200px;text-align:center;"><span>Interdivisional: 14.00%</span></div>
<div style="left:719.4px;top:459.3px;width:35.4px;height:7.3px;background:#fff;border:1px solid #7c7c84;"></div>
<div class="t" style="top:459px;font-size:6px;line-height:8px;color:#6a6a6a;transform:scaleX(0.891);transform-origin:center center;left:637.10px;width:200px;text-align:center;"><span>Travel: 0.37%</span></div>
<div style="left:720.2px;top:466.4px;width:34.6px;height:7.1px;background:#fff;border:1px solid #7c7c7c;"></div>
<div class="t" style="top:466px;font-size:6px;line-height:8px;color:#6a6a6a;transform:scaleX(0.905);transform-origin:center center;left:637.50px;width:200px;text-align:center;"><span>Other: 2.16%</span></div>
<div style="left:701.2px;top:473.4px;width:53.6px;height:7.4px;background:#fff;border:1px solid #bebeac;"></div>
<div class="t" style="top:473px;font-size:6px;line-height:8px;color:#74765e;transform:scaleX(0.884);transform-origin:center center;left:628.00px;width:200px;text-align:center;"><span>Subcontractor: 0.86%</span></div>
<div style="left:509.2px;top:473.8px;width:42.8px;height:7.4px;background:#fff;border:1px solid #a8a0a4;"></div>
<div class="t" style="top:473px;font-size:6px;line-height:8px;color:#74686c;transform:scaleX(0.893);transform-origin:center center;left:430.60px;width:200px;text-align:center;"><span>Material: 16.84%</span></div>
</section>
</main>
<div style="left:1px;top:489px;width:915px;height:1px;background:#e2f0fa;"></div>
<svg class="i" style="left:0px;top:484px;" width="6" height="6" viewBox="0 0 6 6"><path d="M0 0v6h5.2C2.6 5.4 1.1 3.6 1 0z" fill="#1d7eae"/></svg>
<svg class="i" style="left:254px;top:139px;" width="10" height="12" viewBox="0 0 10 12"><path d="M2.1 1.7v7.2l1.7-1.5 1.3 2.6 1.3-.6-1.3-2.5 2.6-.3z" fill="#0a0a0a" stroke="#0a0a0a" stroke-width="0.4" stroke-linejoin="round"/></svg>
</div>
</body>
</html>
